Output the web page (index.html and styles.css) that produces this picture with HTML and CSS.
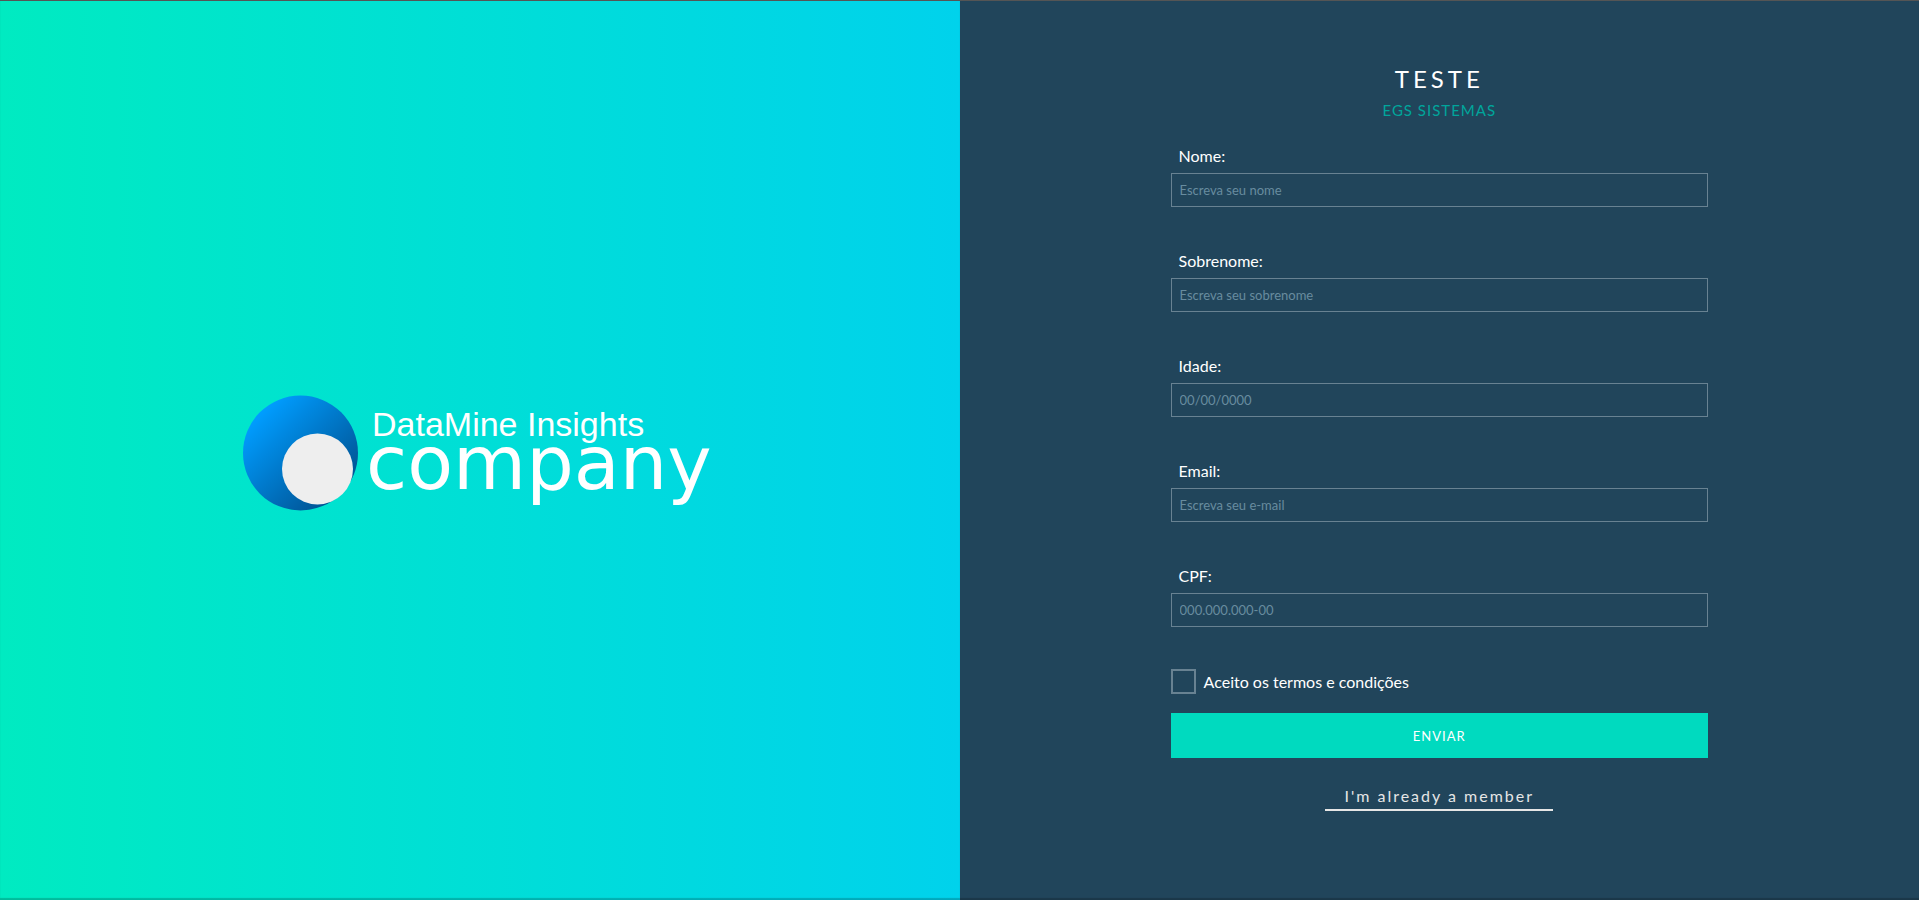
FILE: index.html
```html
<!DOCTYPE html>
<html lang="pt-BR">
<head>
<meta charset="utf-8">
<meta name="viewport" content="width=device-width, initial-scale=1">
<title>Teste - EGS Sistemas</title>
<link rel="stylesheet" href="styles.css">
</head>
<body>
<main class="page">
  <section class="brand">
    <svg class="logo" viewBox="0 0 466 116" role="img" aria-label="DataMine Insights company">
      <defs>
        <linearGradient id="disc" x1="0.15" y1="0.15" x2="0.85" y2="0.85">
          <stop offset="0" stop-color="#009dff"/>
          <stop offset="1" stop-color="#005292"/>
        </linearGradient>
      </defs>
      <circle cx="57.5" cy="58" r="57.5" fill="url(#disc)"/>
      <circle cx="74.5" cy="74" r="35.5" fill="#eee"/>
      <text class="logo-name" x="129" y="41">DataMine Insights</text>
      <text class="logo-word" x="123" y="94">company</text>
    </svg>
  </section>
  <section class="panel">
    <form class="form">
      <h1 class="title">TESTE</h1>
      <h2 class="subtitle">EGS SISTEMAS</h2>
      <div class="fields">
        <div class="field">
          <label class="label" for="nome">Nome:</label>
          <input class="input" id="nome" type="text" placeholder="Escreva seu nome">
        </div>
        <div class="field">
          <label class="label" for="sobrenome">Sobrenome:</label>
          <input class="input" id="sobrenome" type="text" placeholder="Escreva seu sobrenome">
        </div>
        <div class="field">
          <label class="label" for="idade">Idade:</label>
          <input class="input" id="idade" type="text" placeholder="00/00/0000">
        </div>
        <div class="field">
          <label class="label" for="email">Email:</label>
          <input class="input" id="email" type="email" placeholder="Escreva seu e-mail">
        </div>
        <div class="field">
          <label class="label" for="cpf">CPF:</label>
          <input class="input" id="cpf" type="text" placeholder="000.000.000-00">
        </div>
      </div>
      <div class="terms">
        <input class="check" id="termos" type="checkbox">
        <label for="termos">Aceito os termos e condições</label>
      </div>
      <button class="submit" type="submit">ENVIAR</button>
      <a class="member" href="#">I'm already a member</a>
    </form>
  </section>
</main>
</body>
</html>
```
FILE: styles.css
```css
* {
  box-sizing: border-box;
}

body {
  margin: 0;
  font-family: Lato, "Liberation Sans", sans-serif;
  font-size: 16px;
  line-height: 24px;
  color: #fff;
  background: #21455b;
}

.page {
  display: grid;
  grid-template-columns: 1fr 1fr;
  min-height: 100vh;
  border-top: 1px solid #555;
  box-shadow: inset 0 -2px 1px rgba(0, 0, 0, 0.2);
}

.brand {
  display: flex;
  align-items: center;
  justify-content: center;
  padding-right: 8px;
  padding-top: 4px;
  background: linear-gradient(to right, #00ebc1, #00d2ec);
  box-shadow: inset 0 -2px 1px rgba(0, 0, 0, 0.2);
}

.logo {
  width: 466px;
  max-width: 90%;
  overflow: visible;
}

.logo-name {
  font: 34px "Liberation Sans", sans-serif;
  fill: #fff;
}

.logo-word {
  font: 75px "DejaVu Sans", sans-serif;
  fill: #fff;
}

.panel {
  padding: 62px 22%;
}

.form {
  display: flex;
  flex-direction: column;
}

.title,
.subtitle {
  margin: 0;
  font-weight: 400;
  text-align: center;
}

.title {
  font-size: 24px;
  line-height: 32px;
  letter-spacing: 4px;
}

.subtitle {
  margin-top: 3px;
  font-size: 15px;
  letter-spacing: 1px;
  color: #00a59b;
}

.fields {
  display: grid;
  gap: 42px;
  margin-top: 22px;
}

.field {
  display: grid;
  gap: 5px;
}

.label {
  padding-left: 8px;
}

.input {
  width: 100%;
  height: 34px;
  padding: 0 8px;
  border: 1px solid #688292;
  border-radius: 0;
  background: transparent;
  color: #fff;
  font: 13px Lato, "Liberation Sans", sans-serif;
}

.input::placeholder {
  color: #688c9f;
  opacity: 1;
}

.terms {
  display: flex;
  align-items: center;
  gap: 8px;
  margin-top: 42px;
}

.check {
  appearance: none;
  width: 25px;
  height: 25px;
  margin: 0;
  border: 2px solid #688292;
}

.check:checked {
  background: #00dabf;
}

.submit {
  height: 45px;
  margin-top: 19px;
  border: 0;
  background: #00dabf;
  color: #fff;
  font: 13px Lato, "Liberation Sans", sans-serif;
  letter-spacing: 1px;
  cursor: pointer;
}

.member {
  align-self: center;
  margin-top: 26px;
  padding: 0 19px 1px;
  border-bottom: 2px solid #e6e6e6;
  color: #e6e6e6;
  letter-spacing: 2px;
  text-decoration: none;
}
```
